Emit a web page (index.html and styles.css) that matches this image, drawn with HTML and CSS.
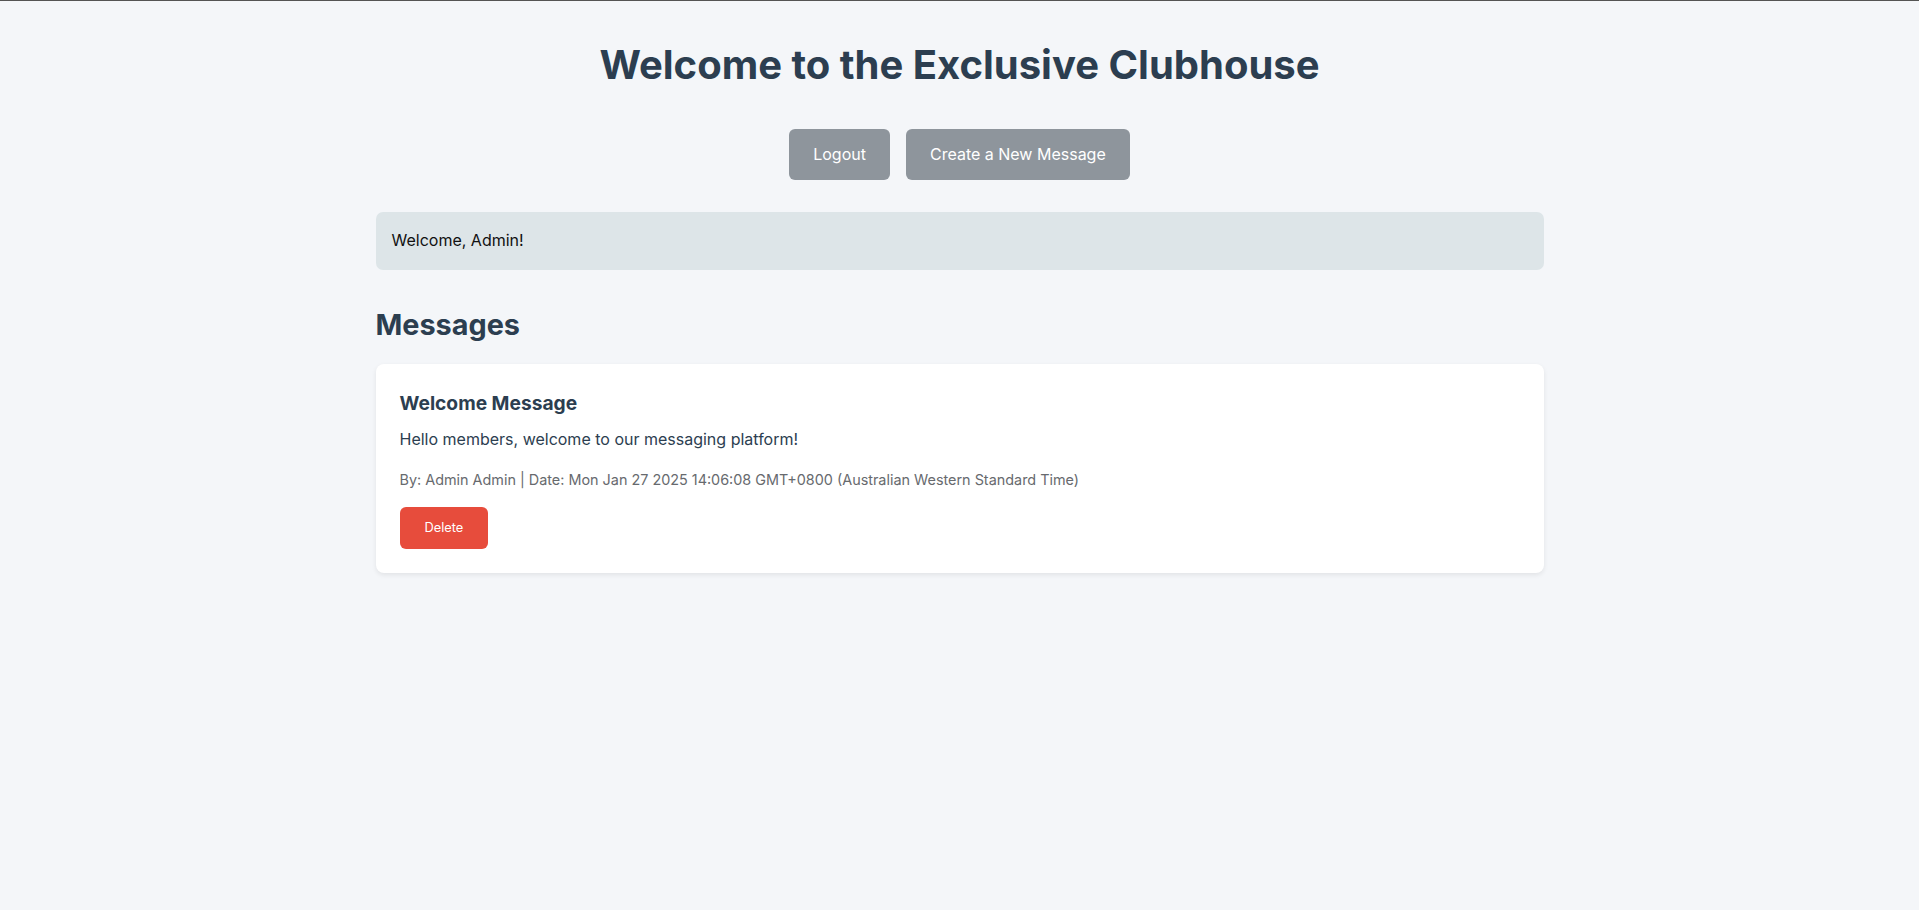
FILE: index.html
```html
<!DOCTYPE html>
<html lang="en">
<head>
<meta charset="utf-8">
<title>Exclusive Clubhouse</title>
<link rel="stylesheet" href="styles.css">
</head>
<body>
<div class="page">
  <main class="container">
    <h1 class="title">Welcome to the Exclusive Clubhouse</h1>
    <nav class="actions">
      <a class="btn btn-muted" href="#">Logout</a>
      <a class="btn btn-muted" href="#">Create a New Message</a>
    </nav>
    <div class="welcome">Welcome, Admin!</div>
    <h2 class="section-title">Messages</h2>
    <article class="card">
      <h3 class="card-title">Welcome Message</h3>
      <p class="card-text">Hello members, welcome to our messaging platform!</p>
      <p class="card-meta">By: Admin Admin | Date: Mon Jan 27 2025 14:06:08 GMT+0800 (Australian Western Standard Time)</p>
      <button class="btn-delete" type="button">Delete</button>
    </article>
  </main>
</div>
</body>
</html>
```
FILE: styles.css
```css
* { box-sizing: border-box; }
html, body { margin: 0; padding: 0; }
body {
  font-family: Inter, "Noto Sans", sans-serif;
  background: #f4f6f9;
  color: #2c3e50;
  line-height: 1.6;
  font-size: 16px;
  min-height: 910px;
}
.page {
  border-top: 1px solid #545454;
  min-height: 910px;
}
.container {
  max-width: 1200px;
  margin: 0 auto;
  padding: 32px 16px;
}
.title {
  margin: 0 0 32px;
  text-align: center;
  font-size: 40px;
  font-weight: 700;
  color: #2c3e50;
}
.actions {
  display: flex;
  justify-content: center;
  gap: 16px;
  margin-bottom: 32px;
}
.btn {
  display: inline-block;
  padding: 12.8px 24px;
  border-radius: 6px;
  font-size: 16px;
  line-height: 1.6;
  text-decoration: none;
  color: #fff;
}
.btn-muted { background: #8e959c; }
.welcome {
  background: #dde5e8;
  color: #111;
  padding: 16px;
  border-radius: 7px;
  margin-bottom: 32px;
}
.section-title {
  margin: 0 0 16px;
  font-size: 28.8px;
  font-weight: 700;
  color: #2c3e50;
}
.card {
  background: #fff;
  border-radius: 8px;
  padding: 24px;
  box-shadow: 0 2px 5px rgba(0, 0, 0, 0.08);
}
.card-title {
  margin: 0 0 8px;
  font-size: 19.2px;
  font-weight: 700;
  color: #2c3e50;
}
.card-text {
  margin: 0 0 16px;
  color: #2c3e50;
}
.card-meta {
  margin: 0 0 16px;
  font-size: 14.4px;
  color: #676a6e;
}
.btn-delete {
  font-family: inherit;
  background: #e74c3c;
  color: #fff;
  border: 0;
  border-radius: 6px;
  padding: 10.5px 25px;
  font-size: 12.8px;
  line-height: 1.6;
  cursor: pointer;
}
```
